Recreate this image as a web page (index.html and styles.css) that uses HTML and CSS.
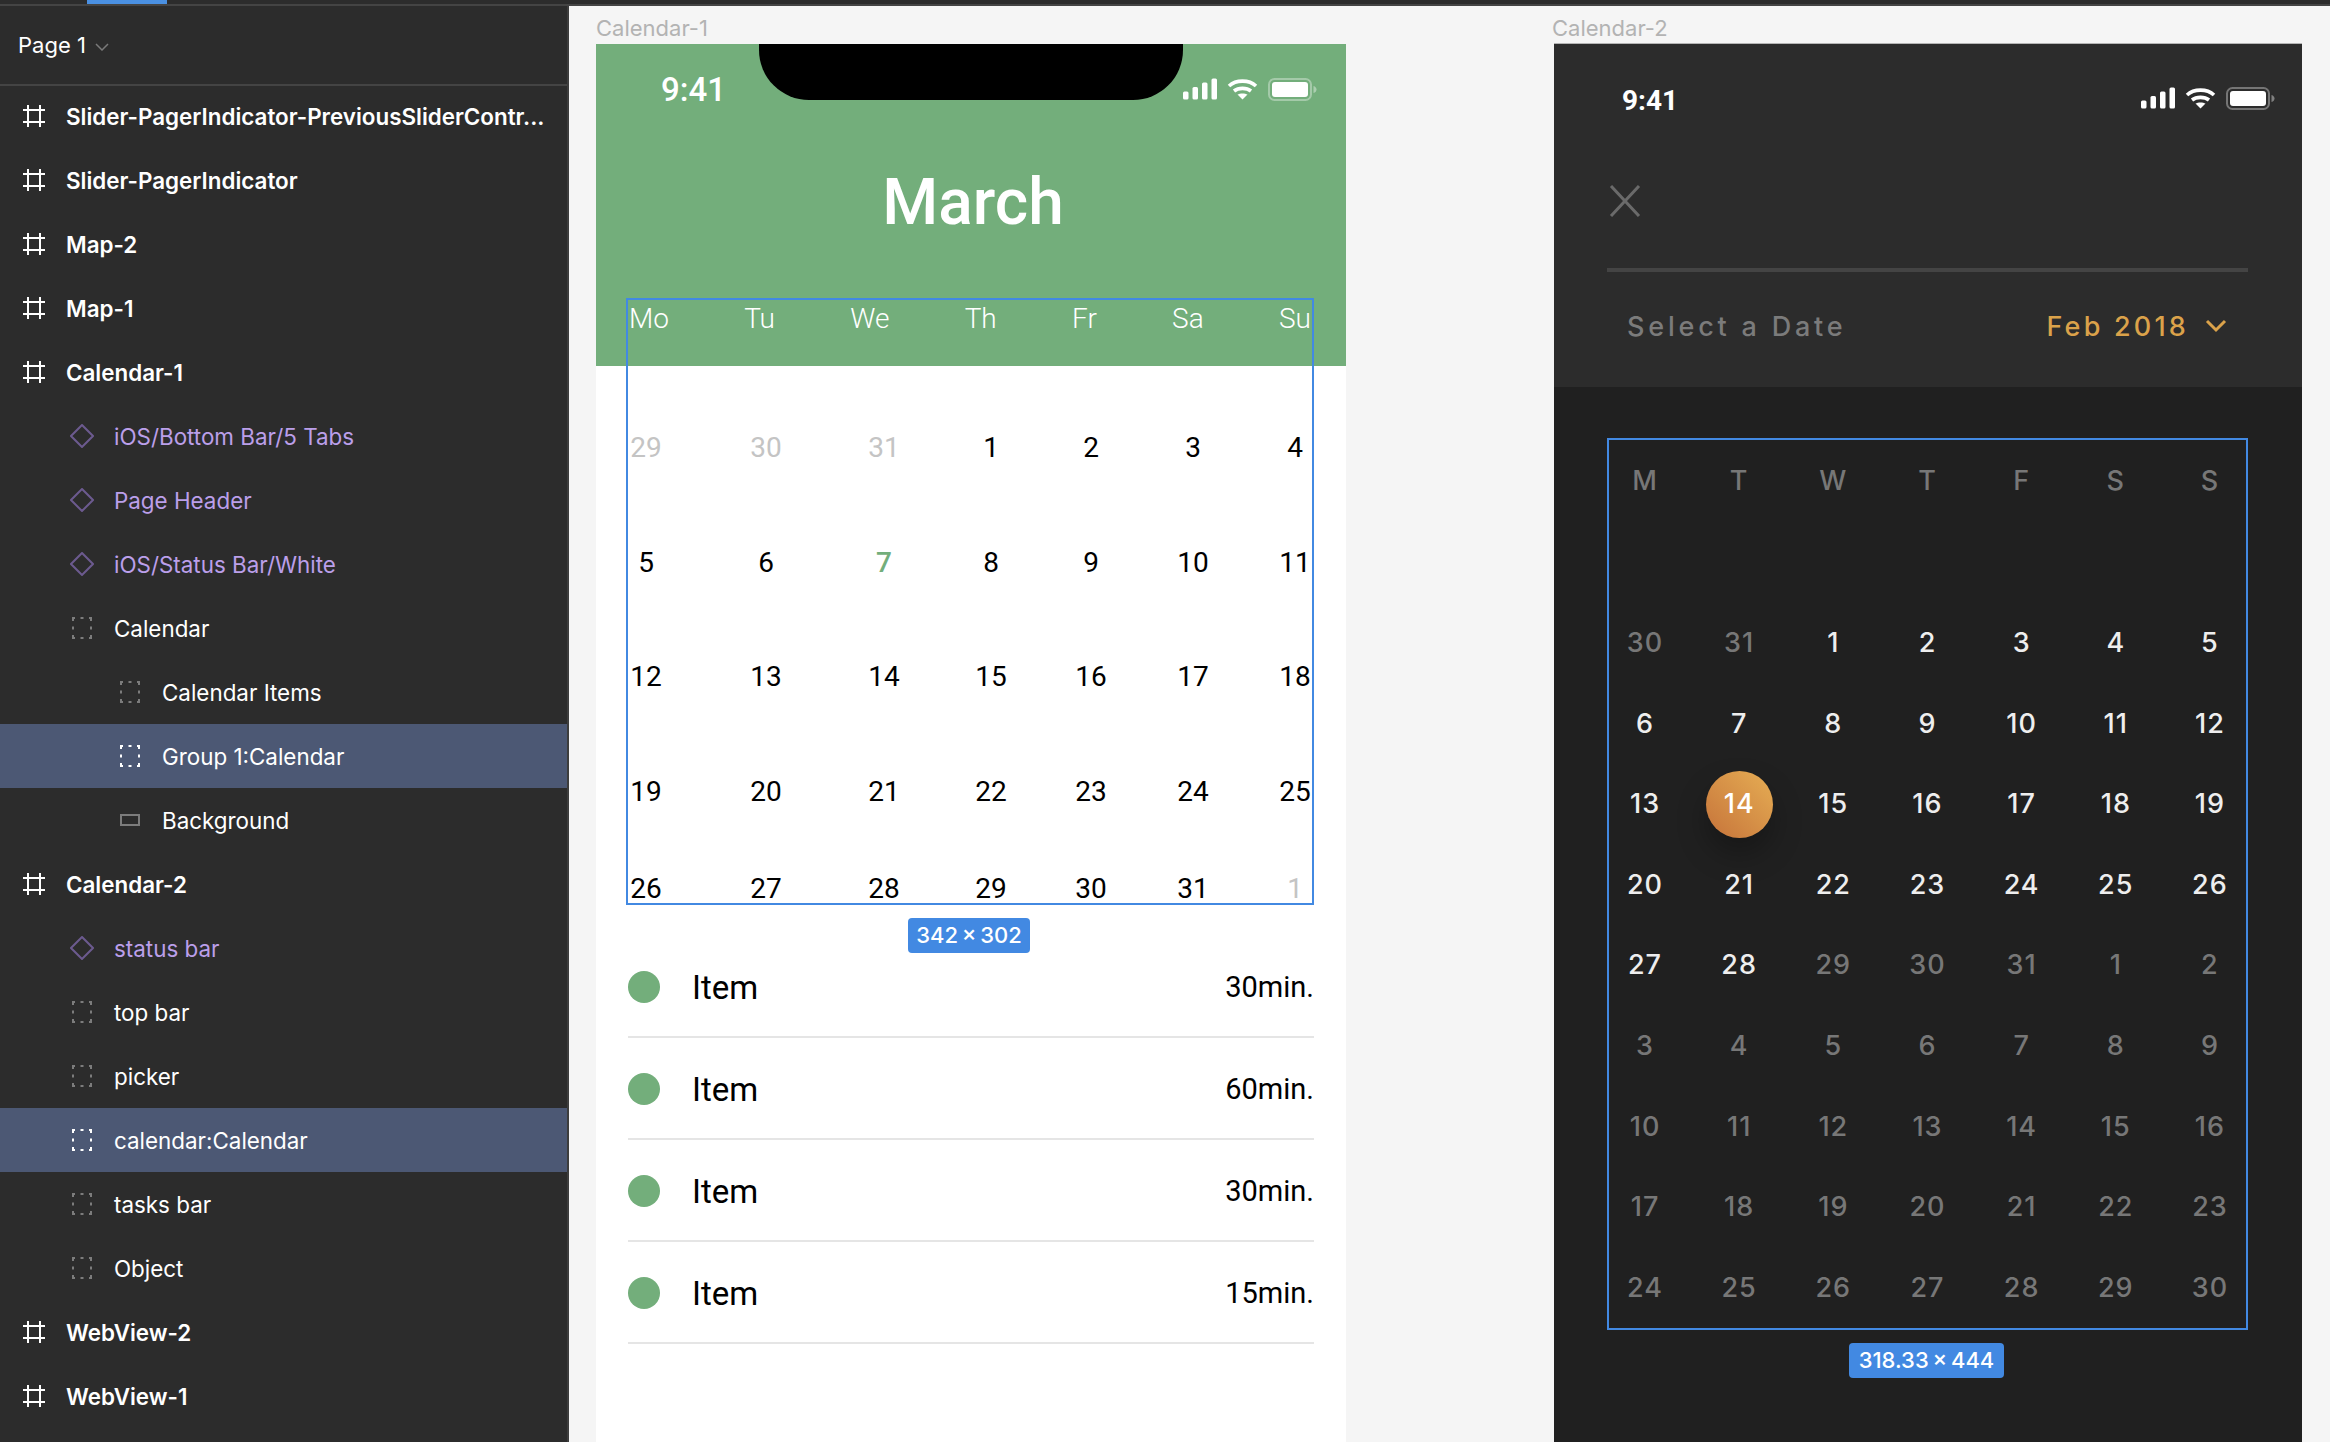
FILE: index.html
```html
<!DOCTYPE html>
<html lang="en">
<head>
	<meta charset="UTF-8">
	<title>Calendar frames</title>
	<link rel="stylesheet" href="styles.css">
</head>
<body>
	<svg class="defs" width="0" height="0">
		<symbol id="i-frame" viewBox="0 0 24 24">
			<path d="M6 1v22M18 1v22M1 6h22M1 18h22" fill="none" stroke="currentColor" stroke-width="2"/>
		</symbol>
		<symbol id="i-comp" viewBox="0 0 24 24">
			<path d="M12 1 23 12 12 23 1 12Z" fill="none" stroke="currentColor" stroke-width="2"/>
		</symbol>
		<symbol id="i-group" viewBox="0 0 24 24">
			<path d="M2 2h3M10.5 2h3M19 2h3M2 22h3M10.5 22h3M19 22h3M3 2v3M3 10.5v3M3 19v3M21 2v3M21 10.5v3M21 19v3" fill="none" stroke="currentColor" stroke-width="2"/>
		</symbol>
		<symbol id="i-rect" viewBox="0 0 24 24">
			<rect x="3" y="7" width="18" height="10" fill="none" stroke="currentColor" stroke-width="2"/>
		</symbol>
		<symbol id="i-status" viewBox="0 0 134 23">
			<rect x="0" y="13.5" width="5.5" height="8" rx="1.5" fill="#fff"/>
			<rect x="9.5" y="9" width="5.5" height="12.5" rx="1.5" fill="#fff"/>
			<rect x="19" y="4.5" width="5.5" height="17" rx="1.5" fill="#fff"/>
			<rect x="28.5" y="0.5" width="5.5" height="21" rx="1.5" fill="#fff"/>
			<path d="M46 8C53 1.500 66 1.500 73 8M51 13C55.500 9.500 63.500 9.500 68 13" fill="none" stroke="#fff" stroke-width="3.600"/>
			<path d="M54.500 16.500C57 15 62 15 64.500 16.500L59.500 21.500Z" fill="#fff"/>
			<rect x="86" y="1" width="42" height="21" rx="5.500" fill="none" stroke="#fff" stroke-opacity=".35" stroke-width="2"/>
			<rect x="89" y="4" width="36" height="15" rx="3" fill="#fff"/>
			<path d="M130.500 8c2 .5 3 2 3 3.500s-1 3-3 3.500Z" fill="#fff" fill-opacity=".4"/>
		</symbol>
	</svg>

	<div class="topbar"><span class="tab"></span></div>

	<div class="main">
		<aside class="sidebar">
			<div class="page-head">
				<span>Page 1</span>
				<svg class="page-chevron" width="14" height="8" viewBox="0 0 14 8"><path d="M1 1l6 6 6-6" fill="none" stroke="#7a7a7a" stroke-width="1.500"/></svg>
			</div>
			<ul class="layers">
				<li class="layer top"><svg class="icon"><use href="#i-frame"/></svg><span class="name">Slider-PagerIndicator-PreviousSliderContr...</span></li>
				<li class="layer top"><svg class="icon"><use href="#i-frame"/></svg><span class="name">Slider-PagerIndicator</span></li>
				<li class="layer top"><svg class="icon"><use href="#i-frame"/></svg><span class="name">Map-2</span></li>
				<li class="layer top"><svg class="icon"><use href="#i-frame"/></svg><span class="name">Map-1</span></li>
				<li class="layer top"><svg class="icon"><use href="#i-frame"/></svg><span class="name">Calendar-1</span></li>
				<li class="layer lv1 comp"><svg class="icon"><use href="#i-comp"/></svg><span class="name">iOS/Bottom Bar/5 Tabs</span></li>
				<li class="layer lv1 comp"><svg class="icon"><use href="#i-comp"/></svg><span class="name">Page Header</span></li>
				<li class="layer lv1 comp"><svg class="icon"><use href="#i-comp"/></svg><span class="name">iOS/Status Bar/White</span></li>
				<li class="layer lv1"><svg class="icon"><use href="#i-group"/></svg><span class="name">Calendar</span></li>
				<li class="layer lv2"><svg class="icon"><use href="#i-group"/></svg><span class="name">Calendar Items</span></li>
				<li class="layer lv2 selected"><svg class="icon"><use href="#i-group"/></svg><span class="name">Group 1:Calendar</span></li>
				<li class="layer lv2"><svg class="icon"><use href="#i-rect"/></svg><span class="name">Background</span></li>
				<li class="layer top"><svg class="icon"><use href="#i-frame"/></svg><span class="name">Calendar-2</span></li>
				<li class="layer lv1 comp"><svg class="icon"><use href="#i-comp"/></svg><span class="name">status bar</span></li>
				<li class="layer lv1"><svg class="icon"><use href="#i-group"/></svg><span class="name">top bar</span></li>
				<li class="layer lv1"><svg class="icon"><use href="#i-group"/></svg><span class="name">picker</span></li>
				<li class="layer lv1 selected"><svg class="icon"><use href="#i-group"/></svg><span class="name">calendar:Calendar</span></li>
				<li class="layer lv1"><svg class="icon"><use href="#i-group"/></svg><span class="name">tasks bar</span></li>
				<li class="layer lv1"><svg class="icon"><use href="#i-group"/></svg><span class="name">Object</span></li>
				<li class="layer top"><svg class="icon"><use href="#i-frame"/></svg><span class="name">WebView-2</span></li>
				<li class="layer top"><svg class="icon"><use href="#i-frame"/></svg><span class="name">WebView-1</span></li>
			</ul>
		</aside>

		<div class="canvas">
			<!-- Calendar-1 -->
			<section class="board board-light">
				<div class="board-label">Calendar-1</div>
				<div class="phone phone-light">
					<header class="green-head">
						<div class="notch"></div>
						<div class="status-light">
							<span class="clock">9:41</span>
							<svg class="status-icons"><use href="#i-status"/></svg>
						</div>
						<h1 class="month">March</h1>
					</header>

					<div class="cal-light">
						<div class="weekdays">
							<span>Mo</span><span>Tu</span><span>We</span><span>Th</span><span>Fr</span><span>Sa</span><span>Su</span>
						</div>
						<div class="week first"><span class="off">29</span><span class="off">30</span><span class="off">31</span><span>1</span><span>2</span><span>3</span><span>4</span></div>
						<div class="week"><span>5</span><span>6</span><span class="now">7</span><span>8</span><span>9</span><span>10</span><span>11</span></div>
						<div class="week"><span>12</span><span>13</span><span>14</span><span>15</span><span>16</span><span>17</span><span>18</span></div>
						<div class="week"><span>19</span><span>20</span><span>21</span><span>22</span><span>23</span><span>24</span><span>25</span></div>
						<div class="week last"><span>26</span><span>27</span><span>28</span><span>29</span><span>30</span><span>31</span><span class="off">1</span></div>
						<div class="size-tag tag-light">342&thinsp;×&thinsp;302</div>
					</div>

					<ul class="items">
						<li class="item"><i class="dot"></i><span class="item-name">Item</span><span class="item-time">30min.</span></li>
						<li class="item"><i class="dot"></i><span class="item-name">Item</span><span class="item-time">60min.</span></li>
						<li class="item"><i class="dot"></i><span class="item-name">Item</span><span class="item-time">30min.</span></li>
						<li class="item"><i class="dot"></i><span class="item-name">Item</span><span class="item-time">15min.</span></li>
					</ul>
				</div>
			</section>

			<!-- Calendar-2 -->
			<section class="board board-dark">
				<div class="board-label">Calendar-2</div>
				<div class="phone phone-dark">
					<header class="dark-head">
						<div class="status-dark">
							<span class="clock-dark">9:41</span>
							<svg class="status-icons"><use href="#i-status"/></svg>
						</div>
						<svg class="close" width="32" height="32" viewBox="0 0 32 32"><path d="M2 1l28 30M30 1 2 31" fill="none" stroke="#6a6a6a" stroke-width="3"/></svg>
						<div class="head-rule"></div>
						<div class="select-row">
							<span class="select-label">Select a Date</span>
							<span class="month-pick">Feb 2018
								<svg width="22" height="14" viewBox="0 0 22 14"><path d="M2 2l9 9 9-9" fill="none" stroke="#dba24a" stroke-width="3"/></svg>
							</span>
						</div>
					</header>

					<div class="cal-dark">
						<div class="grid grid-head">
							<span>M</span><span>T</span><span>W</span><span>T</span><span>F</span><span>S</span><span>S</span>
						</div>
						<div class="grid grid-days">
							<span class="off">30</span><span class="off">31</span><span>1</span><span>2</span><span>3</span><span>4</span><span>5</span>
							<span>6</span><span>7</span><span>8</span><span>9</span><span>10</span><span>11</span><span>12</span>
							<span>13</span><span class="today">14</span><span>15</span><span>16</span><span>17</span><span>18</span><span>19</span>
							<span>20</span><span>21</span><span>22</span><span>23</span><span>24</span><span>25</span><span>26</span>
							<span>27</span><span>28</span><span class="off">29</span><span class="off">30</span><span class="off">31</span><span class="off">1</span><span class="off">2</span>
							<span class="off">3</span><span class="off">4</span><span class="off">5</span><span class="off">6</span><span class="off">7</span><span class="off">8</span><span class="off">9</span>
							<span class="off">10</span><span class="off">11</span><span class="off">12</span><span class="off">13</span><span class="off">14</span><span class="off">15</span><span class="off">16</span>
							<span class="off">17</span><span class="off">18</span><span class="off">19</span><span class="off">20</span><span class="off">21</span><span class="off">22</span><span class="off">23</span>
							<span class="off">24</span><span class="off">25</span><span class="off">26</span><span class="off">27</span><span class="off">28</span><span class="off">29</span><span class="off">30</span>
						</div>
						<div class="size-tag tag-dark">318.33&thinsp;×&thinsp;444</div>
					</div>
				</div>
			</section>
		</div>
	</div>
</body>
</html>
```

FILE: styles.css
```css
*{
	margin:0;
	padding:0;
	box-sizing:border-box;
}

html,body{
	height:100%;
	overflow:hidden;
}

body{
	background:#f5f5f5;
	font-family:Inter,"Liberation Sans",sans-serif;
}

ul{
	list-style:none;
}

.defs{
	position:absolute;
}

/* top strip */
.topbar{
	height:6px;
	background:#2c2c2c;
	border-bottom:2px solid #444;
}

.tab{
	display:block;
	width:80px;
	height:4px;
	margin-left:87px;
	background:#4a90e2;
}

.main{
	display:flex;
	height:1436px;
}

/* layers panel */
.sidebar{
	width:569px;
	flex-shrink:0;
	background:#2c2c2c;
	border-right:2px solid #3d3d3d;
	color:#fff;
}

.page-head{
	display:flex;
	align-items:center;
	gap:9px;
	height:80px;
	margin-bottom:-2px;
	padding-left:18px;
	border-bottom:2px solid #444;
	font-size:22px;
}

.page-chevron{
	margin-top:3px;
}

.layer{
	display:flex;
	align-items:center;
	gap:20px;
	height:64px;
	padding-right:18px;
	font-size:22.400px;
}

.icon{
	width:24px;
	height:24px;
	flex-shrink:0;
	color:#7c7c7c;
}

.name{
	white-space:nowrap;
}

.top{
	padding-left:22px;
	font-weight:600;
}

.top .icon{
	color:#fff;
}

.lv1{
	padding-left:70px;
}

.lv2{
	padding-left:118px;
}

.comp{
	color:#bb9fea;
}

.comp .icon{
	color:#6c5a8f;
}

.selected{
	background:#4c5874;
}

.selected .icon{
	color:#fff;
}

/* canvas */
.canvas{
	position:relative;
	flex:1;
	overflow:hidden;
}

.board{
	position:absolute;
	top:10px;
}

.board-light{
	left:27px;
	width:750px;
}

.board-dark{
	left:985px;
	width:748px;
}

.board-label{
	height:24px;
	margin-bottom:4px;
	font-size:22px;
	line-height:24px;
	color:#b3b3b3;
}

.board-dark .board-label{
	margin-left:-2px;
}

.phone{
	position:relative;
	height:1398px;
}

/* Calendar-1 */
.phone-light{
	background:#fff;
	font-family:Roboto,"Liberation Sans",sans-serif;
}

.green-head{
	position:relative;
	height:322px;
	background:#73ae7b;
	color:#fff;
}

.notch{
	position:absolute;
	left:163px;
	top:0;
	width:424px;
	height:56px;
	background:#000;
	border-radius:0 0 50px 50px;
}

.status-light{
	display:flex;
	justify-content:space-between;
	padding:34px 29px 0 65px;
}

.clock{
	margin-top:-4px;
	font-size:33px;
	font-weight:500;
	line-height:32px;
}

.status-icons{
	display:block;
	width:134px;
	height:23px;
}

.month{
	margin-top:61px;
	font-size:64px;
	font-weight:500;
	line-height:72px;
	text-align:center;
	padding-left:4px;
}

.cal-light{
	position:absolute;
	left:30px;
	top:254px;
	width:688px;
	height:607px;
	border:2px solid #4289e2;
	font-size:28px;
	line-height:32px;
	color:#000;
}

.weekdays{
	display:flex;
	justify-content:space-between;
	height:36px;
	padding:0 1px;
	font-weight:300;
	line-height:38px;
	color:#fff;
}

.week{
	display:flex;
	margin-top:82.500px;
}

.week.first{
	margin-top:96px;
}

.week.last{
	margin-top:65px;
}

.week span{
	width:36px;
	flex-shrink:0;
	text-align:center;
}

.week span:nth-child(2){
	margin-left:84px;
}

.week span:nth-child(3){
	margin-left:82px;
}

.week span:nth-child(4){
	margin-left:71px;
}

.week span:nth-child(5){
	margin-left:64px;
}

.week span:nth-child(6),
.week span:nth-child(7){
	margin-left:66px;
}

.week .off{
	color:#c4c4c4;
}

.week .now{
	color:#73ae7b;
	font-weight:500;
}

.size-tag{
	position:absolute;
	height:35px;
	border-radius:4px;
	background:#4289e2;
	font-family:Inter,"Liberation Sans",sans-serif;
	font-size:22px;
	font-weight:500;
	letter-spacing:0;
	line-height:35px;
	text-align:center;
	color:#fff;
	white-space:nowrap;
}

.tag-light{
	left:280px;
	top:618px;
	width:122px;
}

.tag-dark{
	left:240px;
	top:903px;
	width:155px;
}

.items{
	margin-top:570px;
	padding:0 32px;
}

.item{
	display:flex;
	align-items:center;
	height:102px;
	padding-top:2px;
	border-bottom:2px solid #e5e5e5;
}

.dot{
	width:32px;
	height:32px;
	border-radius:50%;
	background:#73ae7b;
}

.item-name{
	margin-left:32px;
	font-size:33px;
}

.item-time{
	margin-left:auto;
	font-size:29px;
}

/* Calendar-2 */
.phone-dark{
	background:#202020;
	box-shadow:0 -1px #b5b5b5;
}

.dark-head{
	height:343px;
	padding-top:40px;
	background:#2c2c2c;
}

.status-dark{
	display:flex;
	justify-content:space-between;
	padding:3px 27px 0 68px;
	height:32px;
}

.clock-dark{
	margin-top:-2px;
	font-family:Roboto,"Liberation Sans",sans-serif;
	font-size:28px;
	font-weight:700;
	line-height:32px;
	color:#fff;
}

.close{
	display:block;
	margin:69px 0 0 55px;
}

.head-rule{
	width:641px;
	height:4px;
	margin:51px 0 0 53px;
	background:#444;
}

.select-row{
	display:flex;
	justify-content:space-between;
	align-items:center;
	height:40px;
	margin-top:34px;
	padding:0 75px 0 73px;
}

.select-label{
	font-size:27px;
	font-weight:500;
	letter-spacing:3.800px;
	color:#7b7b7b;
}

.month-pick{
	display:flex;
	align-items:center;
	gap:16px;
	font-size:27px;
	font-weight:500;
	letter-spacing:3.200px;
	color:#dba24a;
}

.cal-dark{
	position:relative;
	width:641px;
	height:892px;
	margin:51px 0 0 53px;
	padding:25px 0 0;
	border:2px solid #4289e2;
	font-size:27px;
	font-weight:500;
	letter-spacing:1px;
	line-height:32px;
	color:#eee;
}

.grid{
	display:grid;
	grid-template-columns:repeat(7,60px);
	justify-content:space-between;
	padding:0 6px;
	text-align:center;
}

.grid-head{
	color:#777;
}

.grid-days{
	margin-top:130px;
	row-gap:48.600px;
}

.grid .off{
	color:#777;
}

.today{
	position:relative;
	z-index:0;
	color:#fff;
}

.today::before{
	content:"";
	position:absolute;
	left:-3px;
	top:-17px;
	width:67px;
	height:67px;
	z-index:-1;
	border-radius:50%;
	background:linear-gradient(45deg,#c6733a,#e6ae54);
	box-shadow:0 16px 30px rgba(0,0,0,.28);
}
```
